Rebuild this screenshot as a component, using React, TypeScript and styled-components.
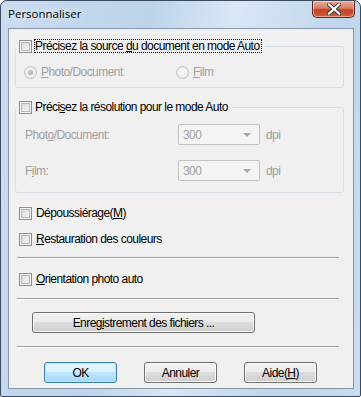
import React from "react";
import styled, { createGlobalStyle, css } from "styled-components";

const Global = createGlobalStyle`
  html, body { margin: 0; padding: 0; background: #ffffff; }
  body {
    font-family: "Liberation Sans", Arial, sans-serif;
    font-size: 12px;
    letter-spacing: -0.55px;
    color: #000;
  }
`;

const Win = styled.div`
  width: 361px;
  height: 397px;
  box-sizing: border-box;
  border: 1px solid #3b4b5d;
  border-radius: 7px 7px 2px 2px;
  background: linear-gradient(100deg, #cadcef 0%, #bcd3eb 35%, #d9e7f5 55%, #bfd5ec 80%, #c9dcef 100%);
  display: flex;
  flex-direction: column;
  overflow: hidden;
`;

const TitleBar = styled.div`
  height: 27px;
  display: flex;
  justify-content: space-between;
  align-items: flex-start;
  flex-shrink: 0;
`;

const Title = styled.span`
  font-family: "Open Sans", "Noto Sans", sans-serif;
  font-size: 11.5px;
  letter-spacing: 0;
  line-height: 16px;
  margin: 5px 0 0 7px;
  color: #000;
  text-shadow: 0 0 6px rgba(255, 255, 255, 0.9);
`;

const CloseBtn = styled.div`
  width: 43px;
  height: 17px;
  margin-right: 5px;
  box-sizing: border-box;
  border: 1px solid #5a2a22;
  border-top: none;
  border-radius: 0 0 5px 5px;
  background: linear-gradient(180deg, #e9ae98 0%, #d77d63 45%, #c4401f 55%, #d0603f 100%);
  box-shadow: inset 0 0 0 1px rgba(255, 220, 200, 0.55);
  display: flex;
  align-items: center;
  justify-content: center;
`;

const Client = styled.div`
  flex: 1;
  margin: 0 6px 7px 7px;
  border: 1px solid #8496aa;
  background: #f0f0f0;
  display: flex;
  flex-direction: column;
`;

const Group = styled.fieldset<{ $top: number }>`
  margin: ${(p) => p.$top}px 9px 0 6px;
  padding: 0;
  min-width: 0;
  border: 1px solid #d5dfe5;
  border-radius: 3px;
`;

const Legend = styled.legend`
  padding: 0 3px 0 3px;
  margin: 0;
  display: flex;
  align-items: center;
  height: 14px;
`;

const Box = styled.span`
  width: 13px;
  height: 13px;
  box-sizing: border-box;
  flex-shrink: 0;
  border: 1px solid #8e8f8f;
  background: linear-gradient(135deg, #cdd1d6 0%, #e6e8ea 50%, #f8f8f8 100%);
  box-shadow: inset 0 0 0 1px #f4f4f4, inset 0 0 0 2px #b3b8bd;
`;

const Focus = styled.span`
  border: 1px dotted #000;
  margin-left: 2px;
  padding: 0 1px 0 0;
  line-height: 12px;
`;

const Label = styled.span<{ $disabled?: boolean; $gap?: number }>`
  line-height: 14px;
  white-space: nowrap;
  margin-left: ${(p) => p.$gap ?? 0}px;
  ${(p) =>
    p.$disabled &&
    css`
      color: #a0a0a0;
    `}
`;

const CheckRow = styled.div<{ $top: number }>`
  display: flex;
  align-items: center;
  gap: 4px;
  margin: ${(p) => p.$top}px 0 0 10px;
  height: 14px;
`;

const RadioRow = styled.div`
  display: grid;
  grid-template-columns: 152px auto;
  margin: 12px 0 8px 8px;
`;

const RadioItem = styled.div`
  display: flex;
  align-items: center;
  gap: 4px;
  height: 14px;
`;

const Radio = styled.span<{ $checked?: boolean }>`
  width: 13px;
  height: 13px;
  box-sizing: border-box;
  border-radius: 50%;
  border: 1px solid #c2c2c2;
  background: radial-gradient(circle at 50% 50%, #f7f7f7 0%, #e8e8e8 100%);
  display: flex;
  align-items: center;
  justify-content: center;
  &::after {
    content: "";
    display: ${(p) => (p.$checked ? "block" : "none")};
    width: 5px;
    height: 5px;
    border-radius: 50%;
    background: radial-gradient(circle at 40% 40%, #d0d0d0 0%, #9a9a9a 100%);
  }
`;

const ResGrid = styled.div`
  display: grid;
  grid-template-columns: 147px 82px auto;
  column-gap: 6px;
  row-gap: 15px;
  align-items: center;
  margin: 10px 0 11px 9px;
`;

const Combo = styled.div`
  height: 21px;
  box-sizing: border-box;
  border: 1px solid #c3c3c3;
  border-radius: 2px;
  background: #f4f4f4;
  display: flex;
  align-items: center;
  justify-content: space-between;
  padding: 0 8px 0 4px;
  color: #a0a0a0;
`;

const Arrow = styled.span`
  width: 0;
  height: 0;
  border-left: 4px solid transparent;
  border-right: 4px solid transparent;
  border-top: 4px solid #a6a6a6;
`;

const Sep = styled.div<{ $top: number }>`
  height: 1px;
  background: #a0a0a0;
  border-bottom: 1px solid #ffffff;
  margin: ${(p) => p.$top}px 14px 0 8px;
`;

const Btn = styled.button<{ $default?: boolean }>`
  font-family: "Liberation Sans", Arial, sans-serif;
  font-size: 12px;
  letter-spacing: -0.55px;
  color: #000;
  height: 21px;
  padding: 0;
  border: 1px solid #707070;
  border-radius: 3px;
  background: linear-gradient(180deg, #f2f2f2 0%, #ebebeb 49%, #dddddd 50%, #cfcfcf 100%);
  box-shadow: inset 0 0 0 1px rgba(255, 255, 255, 0.8);
  ${(p) =>
    p.$default &&
    css`
      border-color: #3c7fb1;
      background: linear-gradient(180deg, #eaf6fd 0%, #d9f0fc 49%, #bee6fd 50%, #a7d9f5 100%);
      box-shadow: inset 0 0 0 1px #bfe4f8;
    `}
`;

const WideBtn = styled(Btn)`
  width: 223px;
  margin: 12px 0 0 23px;
`;

const ButtonRow = styled.div`
  display: flex;
  gap: 27px;
  margin: 14px 0 0 35px;
  & > button {
    width: 73px;
  }
`;

const U = styled.u`
  text-decoration: underline;
  text-underline-offset: 1px;
`;

export default function App() {
  return (
    <>
      <Global />
      <Win>
        <TitleBar>
          <Title>Personnaliser</Title>
          <CloseBtn>
            <svg width="14" height="12" viewBox="0 0 14 12">
              <path
                d="M2 1.5 L12 10.5 M12 1.5 L2 10.5"
                stroke="#3a3a3a"
                strokeWidth="4"
                strokeLinecap="square"
              />
              <path
                d="M2 1.5 L12 10.5 M12 1.5 L2 10.5"
                stroke="#ffffff"
                strokeWidth="2.2"
                strokeLinecap="square"
              />
            </svg>
          </CloseBtn>
        </TitleBar>
        <Client>
          <Group $top={10}>
            <Legend>
              <Box />
              <Focus>
                Précisez la source <U>d</U>u document en mode Auto
              </Focus>
            </Legend>
            <RadioRow>
              <RadioItem>
                <Radio $checked />
                <Label $disabled>
                  <U>P</U>hoto/Document
                </Label>
              </RadioItem>
              <RadioItem>
                <Radio />
                <Label $disabled>
                  <U>F</U>ilm
                </Label>
              </RadioItem>
            </RadioRow>
          </Group>
          <Group $top={12}>
            <Legend>
              <Box />
              <Label $gap={3}>
                Préci<U>s</U>ez la résolution pour le mode Auto
              </Label>
            </Legend>
            <ResGrid>
              <Label $disabled>
                Phot<U>o</U>/Document:
              </Label>
              <Combo>
                300
                <Arrow />
              </Combo>
              <Label $disabled>dpi</Label>
              <Label $disabled>
                F<U>i</U>lm:
              </Label>
              <Combo>
                300
                <Arrow />
              </Combo>
              <Label $disabled>dpi</Label>
            </ResGrid>
          </Group>
          <CheckRow $top={13}>
            <Box />
            <Label>
              Dépoussiérage(<U>M</U>)
            </Label>
          </CheckRow>
          <CheckRow $top={12}>
            <Box />
            <Label>
              <U>R</U>estauration des couleurs
            </Label>
          </CheckRow>
          <Sep $top={11} />
          <CheckRow $top={13}>
            <Box />
            <Label>
              <U>O</U>rientation photo auto
            </Label>
          </CheckRow>
          <Sep $top={12} />
          <WideBtn>
            Enreg<U>i</U>strement des fichiers ...
          </WideBtn>
          <Sep $top={13} />
          <ButtonRow>
            <Btn $default>OK</Btn>
            <Btn>Annuler</Btn>
            <Btn>
              Aide(<U>H</U>)
            </Btn>
          </ButtonRow>
        </Client>
      </Win>
    </>
  );
}
